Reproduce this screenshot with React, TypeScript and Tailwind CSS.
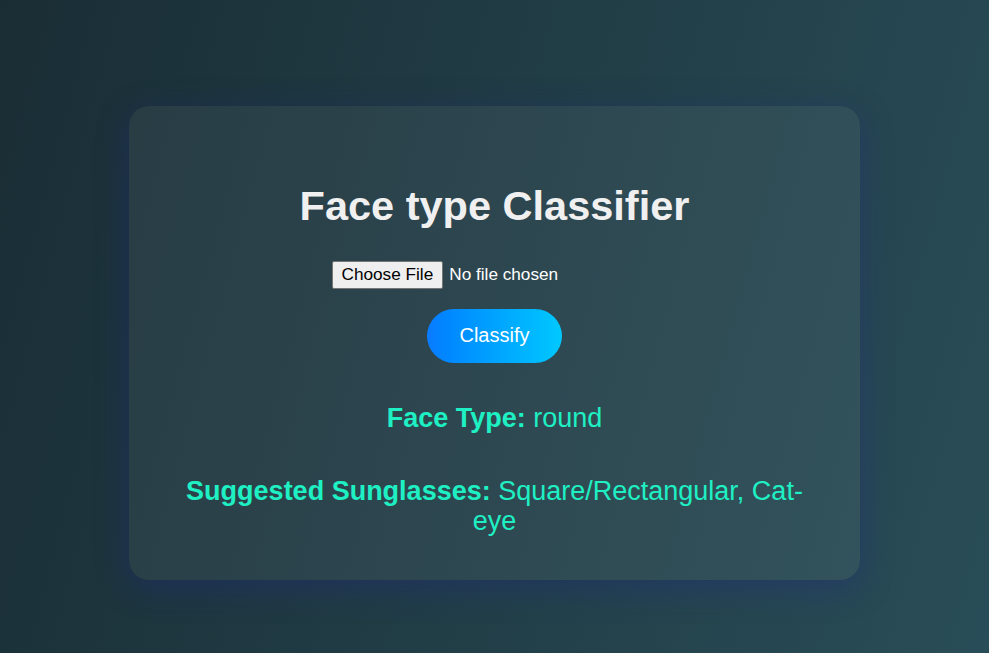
import React from 'react';

export default function App() {
  return (
    <main className="flex h-[653px] justify-center bg-[linear-gradient(105deg,#1a2d35_0%,#213d46_50%,#294d58_100%)] pt-[106px] font-['Liberation_Sans',Arial,sans-serif]">
      <div className="flex h-[474px] w-[731px] flex-col items-center rounded-[20px] bg-white/[0.055] px-10 pt-[76px] text-center shadow-[0_8px_32px_0_rgba(31,38,135,0.37)]">
        <h1 className="text-[41.5px] font-bold leading-[1.15] text-[#f0f0f0]">Face type Classifier</h1>

        <input
          type="file"
          accept="image/*"
          className="mt-[31px] w-[326px] text-left text-[17.2px] leading-[1.15] text-white file:mr-[6px] file:rounded-[2px] file:border file:border-solid file:border-[#767676] file:bg-[#efefef] file:px-[9px] file:py-[3px] file:text-black"
        />

        <button className="mt-[20px] rounded-full bg-gradient-to-r from-[#0a7bff] to-[#00c8ff] px-8 py-[15.5px] text-[20px] leading-[1.15] text-white">
          Classify
        </button>

        <p className="mt-[41px] text-[27px] leading-[1.11] text-[#1ef0c4]">
          <span className="font-bold">Face Type:</span> round
        </p>

        <p className="mt-[44px] text-[27px] leading-[1.11] text-[#1ef0c4]">
          <span className="font-bold">Suggested Sunglasses:</span> Square/Rectangular, Cat-eye
        </p>
      </div>
    </main>
  );
}
